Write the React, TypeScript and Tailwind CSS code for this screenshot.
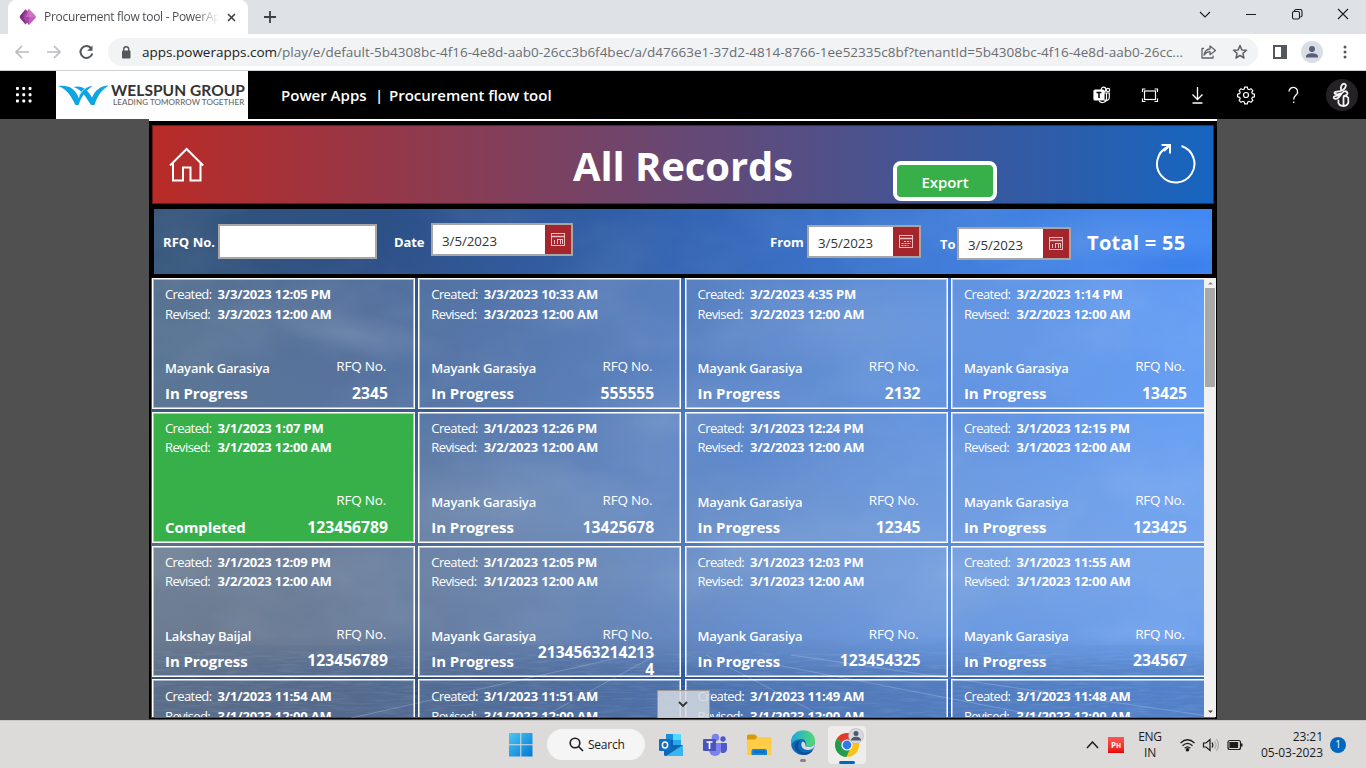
import React from "react";

type Rec = { created: string; revised: string; name: string; status: string; rfq: string };

const records: Rec[] = [
  { created: "3/3/2023 12:05 PM", revised: "3/3/2023 12:00 AM", name: "Mayank Garasiya", status: "In Progress", rfq: "2345" },
  { created: "3/3/2023 10:33 AM", revised: "3/3/2023 12:00 AM", name: "Mayank Garasiya", status: "In Progress", rfq: "555555" },
  { created: "3/2/2023 4:35 PM", revised: "3/2/2023 12:00 AM", name: "Mayank Garasiya", status: "In Progress", rfq: "2132" },
  { created: "3/2/2023 1:14 PM", revised: "3/2/2023 12:00 AM", name: "Mayank Garasiya", status: "In Progress", rfq: "13425" },
  { created: "3/1/2023 1:07 PM", revised: "3/1/2023 12:00 AM", name: "", status: "Completed", rfq: "123456789" },
  { created: "3/1/2023 12:26 PM", revised: "3/2/2023 12:00 AM", name: "Mayank Garasiya", status: "In Progress", rfq: "13425678" },
  { created: "3/1/2023 12:24 PM", revised: "3/2/2023 12:00 AM", name: "Mayank Garasiya", status: "In Progress", rfq: "12345" },
  { created: "3/1/2023 12:15 PM", revised: "3/1/2023 12:00 AM", name: "Mayank Garasiya", status: "In Progress", rfq: "123425" },
  { created: "3/1/2023 12:09 PM", revised: "3/2/2023 12:00 AM", name: "Lakshay Baijal", status: "In Progress", rfq: "123456789" },
  { created: "3/1/2023 12:05 PM", revised: "3/1/2023 12:00 AM", name: "Mayank Garasiya", status: "In Progress", rfq: "21345632142134" },
  { created: "3/1/2023 12:03 PM", revised: "3/1/2023 12:00 AM", name: "Mayank Garasiya", status: "In Progress", rfq: "123454325" },
  { created: "3/1/2023 11:55 AM", revised: "3/1/2023 12:00 AM", name: "Mayank Garasiya", status: "In Progress", rfq: "234567" },
  { created: "3/1/2023 11:54 AM", revised: "3/1/2023 12:00 AM", name: "", status: "", rfq: "" },
  { created: "3/1/2023 11:51 AM", revised: "3/1/2023 12:00 AM", name: "", status: "", rfq: "" },
  { created: "3/1/2023 11:49 AM", revised: "3/1/2023 12:00 AM", name: "", status: "", rfq: "" },
  { created: "3/1/2023 11:48 AM", revised: "3/1/2023 12:00 AM", name: "", status: "", rfq: "" },
];

function TabStrip() {
  return (
    <div className="flex h-[34px] shrink-0 bg-[#dee1e6]">
      <div className="ml-2 flex h-[34px] w-[240px] items-center rounded-t-lg bg-white pl-[11px]">
        <svg className="shrink-0" width="18" height="18" viewBox="0 0 18 18">
          <path d="M6.5 1.2 1.2 7.6a2 2 0 0 0 0 2.6l5.3 6.3L9 9z" fill="#7b2a80" />
          <path d="M6.5 1.2 12 7.5v3L6.5 16.6 3 9z" fill="#97368f" />
          <path d="m10 1 6.3 6.4a2 2 0 0 1 0 2.8L10 17l-4.500-6.500v-3z" fill="#c25fbc" />
          <path d="M10 1v16l-4.500-6.500v-3z" fill="#a647a3" />
          <path d="m10 1 7 8H7z" fill="#dc8cd6" opacity=".5" />
        </svg>
        <div className="ml-[7px] w-[175px] shrink-0 overflow-hidden whitespace-nowrap bg-linear-to-r from-[#45494d] from-[86%] to-transparent bg-clip-text text-[12px] tracking-[-0.3px] text-transparent">
          Procurement flow tool - PowerAp
        </div>
        <svg className="ml-[8px] shrink-0" width="9" height="9" viewBox="0 0 9 9" stroke="#3c4043" strokeWidth="1.6">
          <path d="m1 1 7 7M8 1 1 8" />
        </svg>
      </div>
      <svg className="mt-[11px] ml-[16px]" width="12" height="12" stroke="#3c4043" strokeWidth="1.8">
        <path d="M6 0v12M0 6h12" />
      </svg>
      <svg className="mt-[7px] ml-auto mr-[16px]" width="152" height="15" fill="none" stroke="#1c1c1c" strokeWidth="1.1">
        <path d="m2 5 5 5 5-5M48 7.5h10" />
        <rect x="94.5" y="4.500" width="7" height="7.500" rx="1.500" />
        <path d="M96.500 4.500V4q0-1.500 1.500-1.500h4.200q1.800 0 1.800 1.800v4.200q0 1.500-1.800 1.500" />
        <path d="m140 2 10 10M150 2l-10 10" />
      </svg>
    </div>
  );
}

function AddressBar() {
  return (
    <div className="flex h-[37px] shrink-0 items-center border-b border-[#cfd2d5] bg-white">
      <svg className="ml-[14px] shrink-0" width="82" height="16" fill="none" strokeWidth="1.7">
        <path d="M15 8H2M8 2 2 8l6 6M33 8h13M40 2l6 6-6 6" stroke="#b9bcc0" />
        <path d="M77 4a6 6 0 1 0 1.300 5.500" stroke="#54585c" strokeWidth="2" />
        <path d="M78.500 1.500v5.300h-5.300z" fill="#54585c" />
      </svg>
      <div className="ml-[12px] flex h-7 w-[1150px] shrink-0 items-center rounded-full bg-[#f1f3f4]">
        <svg className="ml-[13px] shrink-0" width="10" height="13" viewBox="0 0 10 13">
          <rect x="1" y="4.500" width="8.500" height="8" rx="1" fill="#54585c" />
          <path d="M2.700 5V3.200a2.500 2.500 0 0 1 5 0V5" fill="none" stroke="#54585c" strokeWidth="1.400" />
        </svg>
        <div className="ml-[11px] w-[1045px] shrink-0 whitespace-nowrap text-[13.5px] text-[#6a6e73]">
          <span className="text-[#202124]">apps.powerapps.com</span>
          /play/e/default-5b4308bc-4f16-4e8d-aab0-26cc3b6f4bec/a/d47663e1-37d2-4814-8766-1ee52335c8bf?tenantId=5b4308bc-4f16-4e8d-aab0-26cc...
        </div>
        <svg className="ml-[13px] shrink-0" width="54" height="18" fill="none" stroke="#5f6368" strokeWidth="1.300">
          <path d="M4 5.500H2V15h11v-2.500M10 3v3q-5 .5-6 6 2.500-3.300 6-3.300v3L15.500 7.500z" strokeLinejoin="round" />
          <path d="m40 2.500 1.800 4.400 4.700.4-3.600 3.100 1.100 4.600-4-2.500-4 2.500 1.100-4.600-3.600-3.100 4.700-.4z" strokeLinejoin="round" strokeWidth="1.500" />
        </svg>
      </div>
      <svg className="ml-[15px] shrink-0" width="14" height="14">
        <rect x="1" y="1" width="12" height="12" fill="none" stroke="#54585c" strokeWidth="2" />
        <path d="M8 1h5v12H8z" fill="#54585c" />
      </svg>
      <svg className="ml-[14px] shrink-0" width="22" height="22">
        <circle cx="11" cy="11" r="11" fill="#dadde4" />
        <circle cx="11" cy="8" r="3" fill="#56607a" />
        <path d="M5 16.500v-1.300c0-4 12-4 12 0v1.300z" fill="#56607a" />
      </svg>
      <svg className="ml-[20px] shrink-0" width="4" height="14" fill="#54585c">
        <circle cx="2" cy="2" r="1.500" /><circle cx="2" cy="7" r="1.500" /><circle cx="2" cy="12" r="1.500" />
      </svg>
    </div>
  );
}

function PortalHeader() {
  return (
    <div className="flex h-12 shrink-0 items-center bg-black">
      <svg className="ml-4 shrink-0" width="16" height="16" fill="#fff">
        {[0, 6.300, 12.600].map((y) => [0, 6.300, 12.600].map((x) => <rect key={x + "-" + y} x={x} y={y} width="2.900" height="2.900" rx=".8" />))}
      </svg>
      <div className="ml-6 flex h-12 w-48 shrink-0 bg-white pl-[2px]">
        <svg className="mt-[14px] shrink-0" width="51" height="21" viewBox="0 0 51 21">
          <path d="M0 1c10-1.500 17 2 20.500 11.500C22 7 25 4.500 28 3c2.500-1.300 4-1.700 6.500-1.700C27 6 23.500 12 20.500 20h-3C13 11 9 4 0 1z" fill="#0fa5e4" />
          <path d="M15.500 2c8-2 13.500 1.500 18.500 10.500C37.500 5 42 1 50.500.5 43 5.500 39.500 11 36.500 20H33C27.500 12 24.500 5 15.500 2z" fill="#0fa5e4" />
          <path d="M20.500 13C22 8 24.500 5 28 3" stroke="#fff" strokeWidth=".7" fill="none" />
        </svg>
        <div className="ml-[2px] mt-[11px] flex flex-col whitespace-nowrap font-['Lato']">
          <span className="text-[15.500px] leading-[16px] font-bold tracking-[0.05px] text-[#333]">WELSPUN GROUP</span>
          <span className="ml-[2px] text-[8px] leading-[8px] font-medium tracking-[0.08px] text-[#666]">LEADING TOMORROW TOGETHER</span>
        </div>
      </div>
      <div className="ml-[33px] flex whitespace-nowrap text-[15px] font-semibold text-white">
        <span className="w-[94px]">Power Apps</span>
        <span className="w-[14px]">|</span>
        <span>Procurement flow tool</span>
      </div>
      <div className="mr-[8px] ml-auto flex items-center">
        <svg width="234" height="24" fill="none" stroke="#fff" strokeWidth="1.200">
          <rect x="18" y="7" width="10" height="10" rx="1" fill="#fff" />
          <path d="M20.500 9.500h5M23 9.500v5.500" stroke="#000" strokeWidth="1.500" />
          <path d="M28 10h5.300v4.500a3 3 0 0 1-5 2.200M23 17.500c1 3 7.500 3 7.500-2V10" />
          <circle cx="27.500" cy="6.500" r="2.300" /><circle cx="32" cy="7" r="1.700" />
          <rect x="68.500" y="8" width="11" height="8.500" />
          <path d="M66.500 9V6h3M78.500 6h3v3M81.500 15.500v3h-3M69.500 18.500h-3v-3" />
          <path d="M121.500 4v12.500M116.500 11.500l5 5 5-5M116.500 20h10" strokeWidth="1.300" />
          <circle cx="170" cy="12" r="2.500" />
          <path d="m168.700 4.500 2.600 0 .5 2 1.400.6 1.800-1 1.800 1.800-1 1.800.6 1.400 2 .5v2.600l-2 .5-.6 1.400 1 1.800-1.800 1.800-1.800-1-1.400.6-.5 2h-2.600l-.5-2-1.400-.6-1.800 1-1.800-1.800 1-1.800-.6-1.400-2-.5v-2.600l2-.5.6-1.400-1-1.800 1.800-1.800 1.800 1 1.400-.6z" transform="translate(0 -.4)" />
          <path d="M213 8.500a4.300 4.300 0 1 1 7.700 2.800c-1.300 1.500-3 2.200-3 5.200M217.700 18.500v1.500" strokeWidth="1.300" />
        </svg>
        <svg className="ml-[16px]" width="32" height="32" fill="none" stroke="#f5f5f5" strokeWidth="1.800" strokeLinecap="round">
          <circle cx="16" cy="16" r="16" fill="#242224" stroke="none" />
          <path d="M15 10.500c-.5-4 1.500-6 3.500-5.700 2.300.4 1.500 4-1.500 6.200-3.500 2.300-8 1-8.500 2.500-.4 1.600 3 2.300 5 1.300" />
          <path d="M14.500 14.500c-1.500 2.800-5.500 1.800-6.500 3.300s1.500 3.200 4 1.200c2.500-2.200 3.500-5.500 6-6.500 3-1 4.500 2 2.500 3.500-1 .8-2.200 1-3.200 1 3-.3 5.700 1.300 5 3" />
          <path d="M17.500 18v8M12.500 21.500c-1 4 2 5.500 5 5.500s5.700-2.500 4.800-6" />
        </svg>
      </div>
    </div>
  );
}

function CalendarButton({ dots }: { dots?: boolean }) {
  return (
    <div className="flex h-full w-[26px] shrink-0 items-center justify-center bg-[#a4262c]">
      <svg width="14" height="13" fill="none" stroke="#e9bfc2" strokeWidth="1">
        <rect x=".5" y=".5" width="13" height="12" />
        <path d="M1 3.500h12" strokeWidth="1.500" />
        {dots ? <path d="M5 6.500h7M2.500 8.500h9.500M2.500 10.500h7" strokeDasharray="2 1" /> : <path d="M3.500 7v4M6.500 7v4M9.500 11V6.500M11.500 11V6.500M6 6.500h6" />}
      </svg>
    </div>
  );
}

function DateField({ className, dots }: { className: string; dots?: boolean }) {
  return (
    <div className={"flex h-[33px] shrink-0 items-center border-2 border-[#a6a6a6] bg-white " + className}>
      <span className="grow pt-[4px] pl-[9px] text-[13.300px] tracking-[-0.05px] text-[#333]">3/5/2023</span>
      <CalendarButton dots={dots} />
    </div>
  );
}

function Sky() {
  return (
    <svg className="absolute top-[84px] left-[2px]" width="1064" height="513">
      <defs>
        <linearGradient id="base" x1="0" x2="1" y1="0" y2="0.08">
          <stop offset="0" stopColor="#345478" />
          <stop offset=".22" stopColor="#2c4f86" />
          <stop offset=".5" stopColor="#3263b2" />
          <stop offset=".75" stopColor="#3f7cda" />
          <stop offset="1" stopColor="#4289f5" />
        </linearGradient>
        <linearGradient id="haze" x1="0" x2="0" y1="0" y2="1">
          <stop offset="0" stopColor="#a3b4c4" stopOpacity="0" />
          <stop offset=".4" stopColor="#a3b4c4" stopOpacity=".08" />
          <stop offset=".72" stopColor="#a3b4c4" stopOpacity=".28" />
          <stop offset=".88" stopColor="#7c93b5" stopOpacity=".17" />
          <stop offset=".94" stopColor="#0b2c60" stopOpacity=".15" />
          <stop offset="1" stopColor="#0b2c60" stopOpacity=".2" />
        </linearGradient>
        <radialGradient id="dusk" cx="0" cy=".9" r=".55">
          <stop offset="0" stopColor="#59626f" stopOpacity=".65" />
          <stop offset="1" stopColor="#59626f" stopOpacity="0" />
        </radialGradient>
        <linearGradient id="sea" x1="0" x2="0" y1="0" y2="1">
          <stop offset="0" stopColor="#17386c" stopOpacity="0" />
          <stop offset=".45" stopColor="#17386c" stopOpacity=".3" />
          <stop offset="1" stopColor="#17386c" stopOpacity=".25" />
        </linearGradient>
        <radialGradient id="puff"><stop offset="0" stopColor="#c9d5e0" stopOpacity=".13" /><stop offset="1" stopColor="#c9d5e0" stopOpacity="0" /></radialGradient>
        <radialGradient id="shade"><stop offset="0" stopColor="#1f5fd0" stopOpacity=".22" /><stop offset="1" stopColor="#1f5fd0" stopOpacity="0" /></radialGradient>
        <filter id="waves" x="0" y="0" width="100%" height="100%">
          <feTurbulence type="fractalNoise" baseFrequency=".04 .45" numOctaves="3" seed="4" />
          <feColorMatrix values="0 0 0 0 .75  0 0 0 0 .85  0 0 0 0 1  .9 0 0 0 -.38" />
        </filter>
        <filter id="clouds" x="0" y="0" width="100%" height="100%">
          <feTurbulence type="fractalNoise" baseFrequency=".008 .013" numOctaves="4" seed="11" />
          <feColorMatrix values="0 0 0 0 .8  0 0 0 0 .86  0 0 0 0 .93  1.1 0 0 0 -.5" />
        </filter>
      </defs>
      <rect width="1064" height="513" fill="url(#base)" />
      <rect width="1064" height="513" fill="url(#haze)" />
      <rect width="1064" height="513" fill="url(#dusk)" />
      <rect width="1064" height="440" filter="url(#clouds)" opacity=".18" />
      <g fill="url(#puff)">
        <ellipse cx="210" cy="130" rx="100" ry="22" transform="rotate(12 210 130)" />
        <ellipse cx="510" cy="215" rx="90" ry="60" />
        <ellipse cx="340" cy="300" rx="180" ry="45" />
        <ellipse cx="700" cy="120" rx="150" ry="50" />
        <ellipse cx="960" cy="30" rx="120" ry="30" />
      </g>
      <g fill="url(#shade)">
        <ellipse cx="590" cy="245" rx="100" ry="45" />
        <ellipse cx="850" cy="215" rx="110" ry="50" />
        <ellipse cx="1040" cy="60" rx="90" ry="22" />
      </g>
      <rect y="430" width="1064" height="83" fill="url(#sea)" />
      <rect y="446" width="1064" height="67" filter="url(#waves)" opacity=".25" />
      <path d="M480 450 200 513M505 450 390 513M555 450l120 63M600 455l300 58M640 450l424 62" stroke="#b9cbea" strokeOpacity=".3" fill="none" />
    </svg>
  );
}

function Card({ r }: { r: Rec }) {
  const done = r.status === "Completed";
  return (
    <div className={"flex h-[131px] flex-col border border-white pt-[6px] pr-[26px] pl-[12px] text-white inset-shadow-[0_0_0_1px_rgba(255,255,255,0.5)] " + (done ? "bg-[#37b04a]" : "bg-white/17")}>
      <div className="flex h-5 items-center whitespace-nowrap">
        <span className="w-[52.500px] text-[13px] tracking-[-0.6px]">Created:</span>
        <span className="text-[13px] font-bold tracking-[-0.15px]">{r.created}</span>
      </div>
      <div className="flex h-[21px] items-center whitespace-nowrap">
        <span className="w-[52.500px] text-[13px] tracking-[-0.6px]">Revised:</span>
        <span className="text-[13px] font-bold tracking-[-0.15px]">{r.revised}</span>
      </div>
      {r.status && (
        <div className="mt-[32px] flex">
          <div className="flex w-[103px] shrink-0 flex-col pt-px whitespace-nowrap">
            <span className="h-[26px] text-[13px] leading-[22px] font-semibold tracking-[-0.2px]">{r.name}</span>
            <span className="text-[15px] leading-[20px] font-bold tracking-[-0.07px]">{r.status}</span>
          </div>
          <div className="flex w-[120px] shrink-0 flex-col text-right">
            <span className="h-[19px] pr-[2px] text-[13.500px] leading-5 tracking-[-0.2px]">RFQ No.</span>
            <span className="flex h-[37px] items-center justify-end text-[15.700px] leading-[17.500px] font-bold">
              <span className="min-w-0 break-all">{r.rfq}</span>
            </span>
          </div>
        </div>
      )}
    </div>
  );
}

function AppCanvas() {
  return (
    <div className="relative mx-[149px] flex h-[600px] w-[1068px] flex-col border-t-2 border-white bg-black">
      <Sky />
      <div className="relative ml-[3px] mt-[4px] flex h-[79px] w-[1062px] shrink-0 bg-linear-to-r/srgb from-[#b92b27] to-[#1565c0] outline outline-black/40 -outline-offset-1">
        <svg className="mt-[22px] ml-[16px] shrink-0" width="38" height="36" fill="none" stroke="#fff" strokeWidth="2">
          <path d="M2 18.500 18.600 2l16.600 16.500M5 16v17.500h10V20.500h7.500v13h10V16" />
        </svg>
        <div className="ml-[366px] w-[222px] shrink-0 text-center text-[40px] leading-[81px] font-bold tracking-[-0.1px] whitespace-nowrap text-white">All Records</div>
        <button className="mt-[36px] ml-[99px] flex h-[40px] w-[104px] shrink-0 items-center justify-center rounded-lg border-4 border-white bg-[#37b04a] pt-[2px] text-[15px] font-semibold tracking-[-0.1px] text-white">Export</button>
        <svg className="ml-[158px] mt-[17px] shrink-0" width="42" height="43" fill="none" stroke="#fff" strokeWidth="2">
          <path d="M26.500 4A18.700 18.700 0 1 1 12.500 5M6.500 3h8.500v8.500" />
          <path d="m9 9 6-6" />
        </svg>
      </div>
      <div className="relative flex h-[74px] shrink-0 border-x-[5px] border-t-[5px] border-b-[4px] border-black whitespace-nowrap text-white">
        <div className="ml-[9px] w-[55px] text-[13px] leading-[66px] font-bold tracking-[0.05px]">RFQ No.</div>
        <div className="mt-[15px] h-[35px] w-[159px] shrink-0 border-2 border-[#a6a6a6] bg-white" />
        <div className="ml-[17px] w-[37px] text-[13px] leading-[66px] font-bold tracking-[-0.1px]">Date</div>
        <DateField className="mt-[14px] w-[142px]" />
        <div className="ml-[197px] w-[37px] text-[13px] leading-[66px] font-bold">From</div>
        <DateField className="mt-[16px] w-[114px]" dots />
        <div className="ml-[19px] w-[17px] text-[13px] leading-[70px] font-bold">To</div>
        <DateField className="mt-[18px] w-[114px]" />
        <div className="ml-[16px] text-[20px] leading-[68px] font-bold tracking-[0.3px]">Total = 55</div>
      </div>
      <div className="relative flex h-[439px] shrink-0">
        <div className="ml-[3px] grid w-[1052px] shrink-0 grid-cols-[263px_263px_263px_263px] content-start gap-x-[3.300px] gap-y-[2.800px] overflow-hidden">
          {records.map((r, i) => <Card key={i} r={r} />)}
        </div>
        <div className="flex w-[12px] shrink-0 flex-col items-center bg-[#f1f1f1]">
          <svg width="12" height="10"><path d="M4 6.500h5L6.500 4z" fill="#888" /></svg>
          <div className="h-[99px] w-[10px] bg-[#a8a8a8]" />
          <svg className="mt-auto" width="12" height="10"><path d="M4 3.500h5L6.500 6z" fill="#444" /></svg>
        </div>
      </div>
      <div className="absolute top-[569px] left-[507.500px] flex h-[28px] w-[53px] items-center justify-center border border-b-0 border-[#999] bg-[#d5d9e0]/85">
        <svg width="10" height="7" fill="none" stroke="#333" strokeWidth="1.800"><path d="m1 1 4 4 4-4" /></svg>
      </div>
    </div>
  );
}

function Taskbar() {
  return (
    <div className="flex h-12 shrink-0 items-center border-t border-[#c9c7c6] bg-[#dcdbda] text-[#1b1b1b]">
      <svg className="ml-[509px] shrink-0" width="24" height="24">
        <defs><linearGradient id="win" x1="0" y1="0" x2="1" y2="1"><stop offset="0" stopColor="#4cc6f5" /><stop offset="1" stopColor="#0078d4" /></linearGradient></defs>
        <path d="M0 0h11.300v11.300H0zM12.300 0H23.500v11.300H12.300zM0 12.300h11.300v11.200H0zM12.300 12.300h11.200v11.200H12.300z" fill="url(#win)" />
      </svg>
      <div className="ml-[14px] flex h-[31px] w-[98px] shrink-0 items-center rounded-full bg-[#f5f5f5]">
        <svg className="ml-[22px]" width="15" height="15" fill="none" stroke="#1b1b1b" strokeWidth="1.600"><circle cx="6" cy="6" r="4.800" /><path d="m9.500 9.500 4.500 4.500" /></svg>
        <span className="ml-[4px] text-[12px] tracking-[-0.25px]">Search</span>
      </div>
      <svg className="ml-[14px] shrink-0" width="24" height="24">
        <path d="M7 1h15v12H7z" fill="#1490df" /><path d="M14 1h8v6h-8z" fill="#50d9ff" /><path d="M14 7h8v6h-8z" fill="#28a8ea" /><path d="M7 7h7v6H7z" fill="#0364b8" />
        <path d="M5 12h19v9.500q0 1.500-1.500 1.500h-16Q5 23 5 21.500z" fill="#1066b5" /><path d="m24 12-17 11h15.500q1.500 0 1.500-1.500z" fill="#35b8f1" />
        <rect y="6" width="12" height="12" rx="1" fill="#0f6fc6" /><ellipse cx="6" cy="12" rx="2.600" ry="3" stroke="#fff" strokeWidth="1.500" fill="none" />
      </svg>
      <svg className="ml-[20px] shrink-0" width="24" height="24">
        <circle cx="20" cy="6" r="2.700" fill="#5059c9" /><circle cx="12.500" cy="4.500" r="3.800" fill="#7b83eb" />
        <path d="M16 10h7q1 0 1 1v5a4 4 0 0 1-6 3.500z" fill="#5059c9" /><path d="M6 10h12v7a6 6 0 0 1-12 0z" fill="#7b83eb" />
        <rect y="6" width="13" height="12" rx="1" fill="#4b53bc" /><path d="M3.500 9h6M6.500 9v7" stroke="#fff" strokeWidth="1.700" />
      </svg>
      <svg className="ml-[20px] shrink-0" width="25" height="24">
        <path d="M0 3q0-1.500 1.500-1.500H8l2.500 2.500V8H0z" fill="#d79a0b" />
        <path d="M0 6.500h8l2.500-2.500h12.500q1.500 0 1.500 1.500V22H0z" fill="#ffcd45" />
        <path d="M4.500 22v-4q0-2 2-2H18q2 0 2 2v4z" fill="#1384dc" /><path d="M7 19h11" stroke="#075aa5" />
      </svg>
      <div className="ml-[19px] flex h-full w-6 shrink-0 flex-col items-center">
        <svg className="mt-[9px]" width="24" height="26">
          <defs><linearGradient id="edge" x1="0" x2="1"><stop offset="0" stopColor="#20a5df" /><stop offset="1" stopColor="#52dc70" /></linearGradient></defs>
          <circle cx="12" cy="13" r="12" fill="#0c69bb" />
          <path d="M0 12C1-4 24-3 24 11c0 6-7 7-10 5 2-4 0-7-4-7-5 0-9 3-10 7z" fill="url(#edge)" />
          <path d="M7 16c0 6 7 9 15 4-3 6-12 7-17 0-3-5 0-9 4-9-1 1-2 3-2 5z" fill="#124c91" />
          <path d="M14 16c3 2 9 1 10-3 0 4-2 7-7 7-6 0-8-5-6-8 2-1 4 2 3 4z" fill="#dcdbda" />
        </svg>
        <div className="mt-[3px] h-[3px] w-[6px] rounded-full bg-[#858585]" />
      </div>
      <div className="ml-[13px] flex h-[38px] w-[38px] shrink-0 flex-col items-center rounded bg-[#eeedec]">
        <svg width="38" height="34">
          <circle cx="19" cy="19" r="12" fill="#fbc116" />
          <path d="M19 19 8.600 13A12 12 0 0 1 29.400 13z" fill="#e33b2e" />
          <path d="M19 19 8.600 13a12 12 0 0 0 9.800 18l4-9z" fill="#229a50" />
          <circle cx="19" cy="19" r="5.600" fill="#fff" /><circle cx="19" cy="19" r="4.400" fill="#3078ed" />
          <circle cx="28" cy="10" r="7.500" fill="#d7dae1" stroke="#aaa" strokeWidth=".5" /><circle cx="28" cy="7.500" r="2.500" fill="#505a6d" /><path d="M23 14.500c0-5 10-5 10 0z" fill="#505a6d" />
        </svg>
        <div className="mt-[1px] h-[3px] w-4 shrink-0 rounded-full bg-[#0067c0]" />
      </div>
      <svg className="ml-[220px] shrink-0" width="13" height="8" fill="none" stroke="#1b1b1b" strokeWidth="1.500"><path d="m1 7 5.500-6L12 7" /></svg>
      <div className="ml-[9px] flex h-4 w-4 shrink-0 items-center justify-center bg-linear-to-b from-[#ff5550] to-[#e80008] text-[8px] font-bold text-white">Pʜ</div>
      <div className="ml-[12px] w-[28px] shrink-0 text-center text-[12px] leading-4 tracking-[-0.3px]"><div>ENG</div><div>IN</div></div>
      <svg className="ml-[15px] shrink-0" width="68" height="16" fill="none" stroke="#1b1b1b" strokeWidth="1.200">
        <path d="M1.500 6q7-6.500 14 0M3.500 8.700q5-4.700 10 0M5.700 11.200q2.800-2.700 5.600 0" /><circle cx="8.500" cy="12.700" r="1.200" fill="#1b1b1b" />
        <path d="M24.500 6h2.500l4-3.500v11L27 10h-2.500zM33 5.500q1.700 2.500 0 5" /><path d="M35.500 4q3 4 0 8M37.500 2q4 6 0 12" stroke="#aaa" />
        <rect x="49" y="3.500" width="12.500" height="9" rx="2" /><path d="M51 5.500h7.500v5H51z" fill="#1b1b1b" /><path d="M62.500 6.500v3" strokeWidth="2" />
      </svg>
      <div className="w-[76px] shrink-0 text-right text-[12px] leading-4 tracking-[-0.05px] whitespace-nowrap"><div>23:21</div><div>05-03-2023</div></div>
      <div className="ml-[7px] flex h-4 w-4 shrink-0 items-center justify-center rounded-full bg-[#0067c0] text-[10px] text-white">1</div>
    </div>
  );
}

export default function App() {
  return (
    <div className="flex h-[768px] w-[1366px] flex-col overflow-hidden bg-[#505050] font-['Open_Sans','Noto_Sans',sans-serif]">
      <TabStrip />
      <AddressBar />
      <PortalHeader />
      <div className="flex h-[601px] shrink-0"><AppCanvas /></div>
      <Taskbar />
    </div>
  );
}
